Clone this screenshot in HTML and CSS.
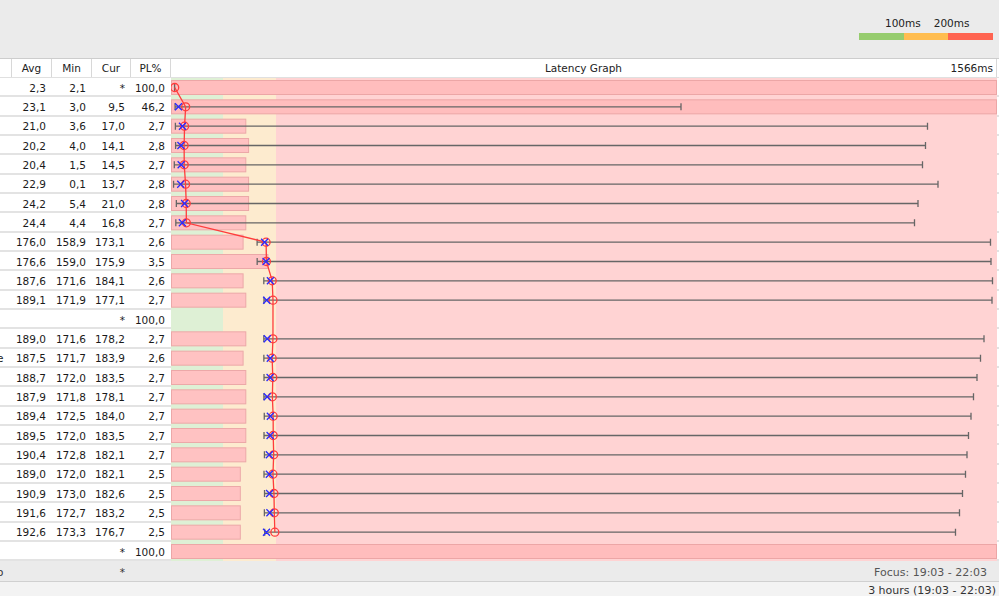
FILE: index.html
```html
<!DOCTYPE html>
<html>
<head>
<meta charset="utf-8">
<link rel="stylesheet" href="styles.css">
</head>
<body>
<div class="top">
  <div class="legend">
    <div class="legend-labels"><span>100ms</span><span>200ms</span></div>
    <div class="legend-bar"><span class="lg-g"></span><span class="lg-o"></span><span class="lg-r"></span></div>
  </div>
</div>

<div class="head">
  <div class="hc"></div>
  <div class="hc">Avg</div>
  <div class="hc">Min</div>
  <div class="hc">Cur</div>
  <div class="hc">PL%</div>
  <div class="hc graph-head"><span></span><span>Latency Graph</span><span class="scale">1566ms</span></div>
  <div class="hc last"></div>
</div>

<div class="main">
  <div class="left">
    <div class="row"><div class="name"></div><div class="n">2,3</div><div class="n">2,1</div><div class="n">*</div><div class="n">100,0</div></div>
    <div class="row"><div class="name"></div><div class="n">23,1</div><div class="n">3,0</div><div class="n">9,5</div><div class="n">46,2</div></div>
    <div class="row"><div class="name"></div><div class="n">21,0</div><div class="n">3,6</div><div class="n">17,0</div><div class="n">2,7</div></div>
    <div class="row"><div class="name"></div><div class="n">20,2</div><div class="n">4,0</div><div class="n">14,1</div><div class="n">2,8</div></div>
    <div class="row"><div class="name"></div><div class="n">20,4</div><div class="n">1,5</div><div class="n">14,5</div><div class="n">2,7</div></div>
    <div class="row"><div class="name"></div><div class="n">22,9</div><div class="n">0,1</div><div class="n">13,7</div><div class="n">2,8</div></div>
    <div class="row"><div class="name"></div><div class="n">24,2</div><div class="n">5,4</div><div class="n">21,0</div><div class="n">2,8</div></div>
    <div class="row"><div class="name"></div><div class="n">24,4</div><div class="n">4,4</div><div class="n">16,8</div><div class="n">2,7</div></div>
    <div class="row"><div class="name"></div><div class="n">176,0</div><div class="n">158,9</div><div class="n">173,1</div><div class="n">2,6</div></div>
    <div class="row"><div class="name"></div><div class="n">176,6</div><div class="n">159,0</div><div class="n">175,9</div><div class="n">3,5</div></div>
    <div class="row"><div class="name"></div><div class="n">187,6</div><div class="n">171,6</div><div class="n">184,1</div><div class="n">2,6</div></div>
    <div class="row"><div class="name"></div><div class="n">189,1</div><div class="n">171,9</div><div class="n">177,1</div><div class="n">2,7</div></div>
    <div class="row"><div class="name"></div><div class="n"></div><div class="n"></div><div class="n">*</div><div class="n">100,0</div></div>
    <div class="row"><div class="name"></div><div class="n">189,0</div><div class="n">171,6</div><div class="n">178,2</div><div class="n">2,7</div></div>
    <div class="row"><div class="name"><span class="clip">e</span></div><div class="n">187,5</div><div class="n">171,7</div><div class="n">183,9</div><div class="n">2,6</div></div>
    <div class="row"><div class="name"></div><div class="n">188,7</div><div class="n">172,0</div><div class="n">183,5</div><div class="n">2,7</div></div>
    <div class="row"><div class="name"></div><div class="n">187,9</div><div class="n">171,8</div><div class="n">178,1</div><div class="n">2,7</div></div>
    <div class="row"><div class="name"></div><div class="n">189,4</div><div class="n">172,5</div><div class="n">184,0</div><div class="n">2,7</div></div>
    <div class="row"><div class="name"></div><div class="n">189,5</div><div class="n">172,0</div><div class="n">183,5</div><div class="n">2,7</div></div>
    <div class="row"><div class="name"></div><div class="n">190,4</div><div class="n">172,8</div><div class="n">182,1</div><div class="n">2,7</div></div>
    <div class="row"><div class="name"></div><div class="n">189,0</div><div class="n">172,0</div><div class="n">182,1</div><div class="n">2,5</div></div>
    <div class="row"><div class="name"></div><div class="n">190,9</div><div class="n">173,0</div><div class="n">182,6</div><div class="n">2,5</div></div>
    <div class="row"><div class="name"></div><div class="n">191,6</div><div class="n">172,7</div><div class="n">183,2</div><div class="n">2,5</div></div>
    <div class="row"><div class="name"></div><div class="n">192,6</div><div class="n">173,3</div><div class="n">176,7</div><div class="n">2,5</div></div>
    <div class="row"><div class="name"></div><div class="n"></div><div class="n"></div><div class="n">*</div><div class="n">100,0</div></div>
  </div>

  <svg class="graph" width="826" height="483.33" viewBox="0 0 826 483.33">
    <rect class="z-g" x="0" y="0" width="52" height="483.33"/>
    <rect class="z-o" x="52" y="0" width="53" height="483.33"/>
    <rect class="z-r" x="105" y="0" width="721" height="483.33"/>

    <g class="full">
      <rect x="0.5" y="2.5" width="825" height="14"/>
      <rect x="0.5" y="21.83" width="825" height="14"/>
      <rect x="0.5" y="466.5" width="825" height="14"/>
    </g>
    <g class="bar">
      <rect x="0.5" y="41.17" width="74.3" height="14"/>
      <rect x="0.5" y="60.5" width="77.1" height="14"/>
      <rect x="0.5" y="79.83" width="74.3" height="14"/>
      <rect x="0.5" y="99.17" width="77.1" height="14"/>
      <rect x="0.5" y="118.5" width="77.1" height="14"/>
      <rect x="0.5" y="137.83" width="74.3" height="14"/>
      <rect x="0.5" y="157.17" width="71.6" height="14"/>
      <rect x="0.5" y="176.5" width="96.4" height="14"/>
      <rect x="0.5" y="195.83" width="71.6" height="14"/>
      <rect x="0.5" y="215.17" width="74.3" height="14"/>
      <rect x="0.5" y="253.83" width="74.3" height="14"/>
      <rect x="0.5" y="273.17" width="71.6" height="14"/>
      <rect x="0.5" y="292.5" width="74.3" height="14"/>
      <rect x="0.5" y="311.83" width="74.3" height="14"/>
      <rect x="0.5" y="331.17" width="74.3" height="14"/>
      <rect x="0.5" y="350.5" width="74.3" height="14"/>
      <rect x="0.5" y="369.83" width="74.3" height="14"/>
      <rect x="0.5" y="389.17" width="68.8" height="14"/>
      <rect x="0.5" y="408.5" width="68.8" height="14"/>
      <rect x="0.5" y="427.83" width="68.8" height="14"/>
      <rect x="0.5" y="447.17" width="68.8" height="14"/>
    </g>

    <path class="rng" d="M3.6 6V13
      M4.08 28.83H510M4.08 25.33v7M510 25.33v7
      M4.39 48.17H756.5M4.39 44.67v7M756.5 44.67v7
      M4.6 67.5H754.5M4.6 64v7M754.5 64v7
      M3.29 86.83H751.5M3.29 83.33v7M751.5 83.33v7
      M2.55 106.17H767M2.55 102.67v7M767 102.67v7
      M5.34 125.5H747M5.34 122v7M747 122v7
      M4.82 144.83H743.5M4.82 141.33v7M743.5 141.33v7
      M86.11 164.17H819.5M86.11 160.67v7M819.5 160.67v7
      M86.17 183.5H820M86.17 180v7M820 180v7
      M92.8 202.83H821.5M92.8 199.33v7M821.5 199.33v7
      M92.95 222.17H821M92.95 218.67v7M821 218.67v7
      M92.8 260.83H813M92.8 257.33v7M813 257.33v7
      M92.85 280.17H809.5M92.85 276.67v7M809.5 276.67v7
      M93.01 299.5H806M93.01 296v7M806 296v7
      M92.9 318.83H802.5M92.9 315.33v7M802.5 315.33v7
      M93.27 338.17H800M93.27 334.67v7M800 334.67v7
      M93.01 357.5H797.5M93.01 354v7M797.5 354v7
      M93.43 376.83H796M93.43 373.33v7M796 373.33v7
      M93.01 396.17H794.5M93.01 392.67v7M794.5 392.67v7
      M93.53 415.5H791.5M93.53 412v7M791.5 412v7
      M93.38 434.83H788.5M93.38 431.33v7M788.5 431.33v7
      M93.69 454.17H784.5M93.69 450.67v7M784.5 450.67v7"/>

    <polyline class="avg-line" points="3.71,9.5 14.66,28.83 13.55,48.17 13.13,67.5 13.23,86.83 14.55,106.17 15.23,125.5 15.34,144.83 95.11,164.17 95.43,183.5 101.21,202.83 102,222.17 101.95,260.83 101.16,280.17 101.79,299.5 101.37,318.83 102.16,338.17 102.21,357.5 102.69,376.83 101.95,396.17 102.95,415.5 103.32,434.83 103.85,454.17"/>

    <g class="avg">
      <circle cx="3.71" cy="9.5" r="4"/>
      <circle cx="14.66" cy="28.83" r="4"/>
      <circle cx="13.55" cy="48.17" r="4"/>
      <circle cx="13.13" cy="67.5" r="4"/>
      <circle cx="13.23" cy="86.83" r="4"/>
      <circle cx="14.55" cy="106.17" r="4"/>
      <circle cx="15.23" cy="125.5" r="4"/>
      <circle cx="15.34" cy="144.83" r="4"/>
      <circle cx="95.11" cy="164.17" r="4"/>
      <circle cx="95.43" cy="183.5" r="4"/>
      <circle cx="101.21" cy="202.83" r="4"/>
      <circle cx="102" cy="222.17" r="4"/>
      <circle cx="101.95" cy="260.83" r="4"/>
      <circle cx="101.16" cy="280.17" r="4"/>
      <circle cx="101.79" cy="299.5" r="4"/>
      <circle cx="101.37" cy="318.83" r="4"/>
      <circle cx="102.16" cy="338.17" r="4"/>
      <circle cx="102.21" cy="357.5" r="4"/>
      <circle cx="102.69" cy="376.83" r="4"/>
      <circle cx="101.95" cy="396.17" r="4"/>
      <circle cx="102.95" cy="415.5" r="4"/>
      <circle cx="103.32" cy="434.83" r="4"/>
      <circle cx="103.85" cy="454.17" r="4"/>
    </g>

    <path class="cur" d="M4 25.33l7 7m0-7l-7 7
      M7.95 44.67l7 7m0-7l-7 7
      M6.42 64l7 7m0-7l-7 7
      M6.63 83.33l7 7m0-7l-7 7
      M6.21 102.67l7 7m0-7l-7 7
      M10.05 122l7 7m0-7l-7 7
      M7.84 141.33l7 7m0-7l-7 7
      M90.09 160.67l7 7m0-7l-7 7
      M91.56 180l7 7m0-7l-7 7
      M95.87 199.33l7 7m0-7l-7 7
      M92.19 218.67l7 7m0-7l-7 7
      M92.77 257.33l7 7m0-7l-7 7
      M95.77 276.67l7 7m0-7l-7 7
      M95.56 296l7 7m0-7l-7 7
      M92.71 315.33l7 7m0-7l-7 7
      M95.82 334.67l7 7m0-7l-7 7
      M95.56 354l7 7m0-7l-7 7
      M94.82 373.33l7 7m0-7l-7 7
      M94.82 392.67l7 7m0-7l-7 7
      M95.08 412l7 7m0-7l-7 7
      M95.4 431.33l7 7m0-7l-7 7
      M91.98 450.67l7 7m0-7l-7 7"/>
  </svg>

  <div class="rstrip"></div>
</div>

<div class="foot">
  <div class="name"><span class="clip">o</span></div>
  <div class="n"></div>
  <div class="n"></div>
  <div class="n">*</div>
  <div class="n"></div>
  <div class="focus">Focus: 19:03 - 22:03</div>
</div>

<div class="status">3 hours (19:03 - 22:03)</div>
</body>
</html>
```

FILE: styles.css
```css
* { box-sizing: border-box; }
html, body { margin: 0; padding: 0; }
body {
  width: 999px;
  height: 596px;
  overflow: hidden;
  background: #f3f3f3;
  font-family: "DejaVu Sans", Verdana, sans-serif;
  font-size: 10.5px;
  color: #1a1a1a;
}

/* top bar with legend */
.top {
  height: 58px;
  background: #ebebeb;
  display: flex;
  justify-content: flex-end;
  padding: 16px 6px 0 0;
}
.legend { width: 134px; }
.legend-labels {
  display: flex;
  gap: 13px;
  padding-left: 26px;
  height: 14px;
  line-height: 14px;
  color: #222;
}
.legend-bar { display: flex; height: 7px; margin-top: 3px; }
.legend-bar span { flex: 1; }
.lg-g { background: #96cc6e; }
.lg-o { background: #ffbd50; }
.lg-r { background: #ff6451; }

/* header */
.head {
  display: grid;
  grid-template-columns: 12px 40px 40px 39px 40px 826px 2px;
  height: 20px;
  background: #fff;
  border-top: 1px solid #cdcdcd;
  border-bottom: 1px solid #e0e0e0;
  color: #222;
}
.hc {
  border-right: 1px solid #d8d8d8;
  text-align: center;
  line-height: 18px;
}
.hc.last { border-right: 0; }
.graph-head {
  display: grid;
  grid-template-columns: 1fr auto 1fr;
}
.graph-head .scale { text-align: right; padding-right: 3px; }

/* body */
.main { display: flex; }
.left { width: 171px; }
.row {
  display: grid;
  grid-template-columns: 12px 40px 40px 39px 40px;
  align-items: center;
  height: 19.333px;
  padding-top: 2px;
  background: #fff;
  border-bottom: 2px solid #e3e3e3;
}
.n { text-align: right; padding-right: 6px; white-space: nowrap; }
.name { overflow: hidden; white-space: nowrap; }
.clip { display: inline-block; margin-left: -3px; }

.graph { display: block; flex: none; }
.rstrip {
  flex: 1;
  background: repeating-linear-gradient(to bottom, #fff 0, #fff 17.333px, #e3e3e3 17.333px, #e3e3e3 19.333px);
}

.z-g { fill: #def0d5; }
.z-o { fill: #fdebcf; }
.z-r { fill: #ffd3d3; }
.full rect { fill: #ffbdbd; stroke: #eca6a6; stroke-width: 1; }
.bar rect { fill: #ffc2c2; stroke: #eca8a8; stroke-width: 1; }
.rng { fill: none; stroke: #666; stroke-width: 1.3; }
.avg-line { fill: none; stroke: #ff3c3c; stroke-width: 1.3; }
.avg circle { fill: none; stroke: #ff3c3c; stroke-width: 1.3; }
.cur { fill: none; stroke: #2a2aff; stroke-width: 1.3; }

/* footer */
.foot {
  display: grid;
  grid-template-columns: 12px 40px 40px 39px 40px 1fr;
  align-items: center;
  height: 21px;
  padding-top: 2px;
  background: #ebebeb;
  border-bottom: 1px solid #d0d0d0;
  color: #333;
}
.focus { text-align: right; padding-right: 12px; color: #555; font-size: 11px; }
.status {
  text-align: right;
  padding-right: 3px;
  line-height: 18px;
  color: #333;
  font-size: 11px;
}
```
